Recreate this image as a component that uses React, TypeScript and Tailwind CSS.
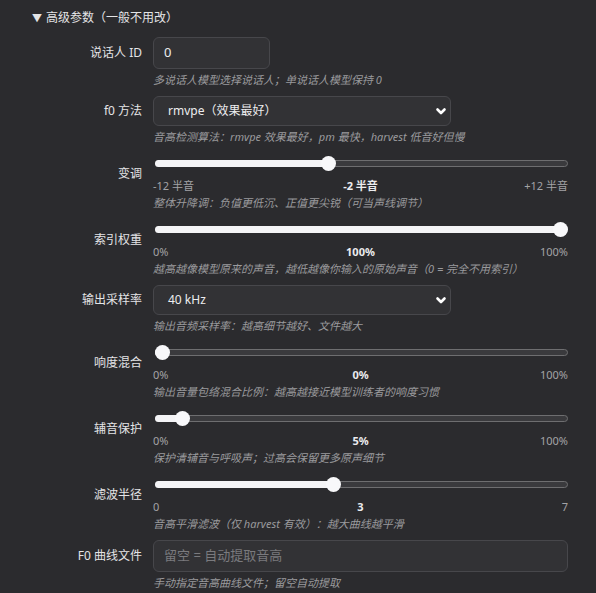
import React from 'react';

const font = { fontFamily: '"Noto Sans", "Noto Sans CJK SC", sans-serif' };

function Chevron() {
  return (
    <svg width="12" height="12" viewBox="0 0 12 12" className="text-white">
      <path d="M2.5 4.5 L6 8 L9.5 4.5" fill="none" stroke="currentColor" strokeWidth="2.6" strokeLinecap="round" strokeLinejoin="round" />
    </svg>
  );
}

function Slider({ pct, min, mid, max }: { pct: number; min: string; mid: string; max: string }) {
  return (
    <div className="flex flex-col">
      <div className="relative h-4 ml-[2px] mt-[2px]">
        <div className="absolute left-0 right-0 top-[5px] h-[7px] rounded-full bg-[#3a3a3d] border border-[#6e6e70]" />
        <div
          className="absolute left-0 top-[5px] h-[7px] rounded-full bg-[#f4f4f6]"
          style={{ width: `calc(${pct}% * (1 - 15 / 413) + 7px)` }}
        />
        <div
          className="absolute top-[1px] w-[15px] h-[15px] rounded-full bg-[#f8f8fa]"
          style={{ left: `calc(${pct}% * (1 - 15 / 413))` }}
        />
      </div>
      <div className="grid grid-cols-3 mt-[7px] text-[11px] leading-4">
        <span className="text-[#a3a3a6]">{min}</span>
        <span className="text-center font-bold text-[#ececee]">{mid}</span>
        <span className="text-right text-[#a3a3a6]">{max}</span>
      </div>
    </div>
  );
}

function Row({ label, hint, tight, children }: { label: string; hint: string; tight?: boolean; children: React.ReactNode }) {
  return (
    <div className="grid grid-cols-[153px_415px]">
      <div className="self-center text-right pr-[11px] text-[12px] text-[#e4e4e6]">{label}</div>
      <div>{children}</div>
      <div className={`col-start-2 ${tight ? 'mt-[1px]' : 'mt-[3px]'} text-[11px] leading-4 italic text-[#9a9a9d] whitespace-nowrap`}>{hint}</div>
    </div>
  );
}

function TextBox({ value, placeholder, w }: { value?: string; placeholder?: string; w: string }) {
  return (
    <div className={`${w} h-8 flex items-center px-[10px] rounded-md bg-[#323235] border border-[#47474b] text-[13px]`}>
      {value ? <span className="text-[#ededef]">{value}</span> : <span className="text-[#7a7a7e]">{placeholder}</span>}
    </div>
  );
}

function Select({ value }: { value: string }) {
  return (
    <div className="w-[298px] h-[30px] flex items-center justify-between pl-[14px] pr-[3px] rounded-md bg-[#323235] border border-[#47474b] text-[12px] text-[#ededef]">
      <span>{value}</span>
      <Chevron />
    </div>
  );
}

export default function App() {
  return (
    <div className="w-[596px] h-[593px] overflow-hidden bg-[#2b2b2e]" style={font}>
      <div className="pt-[8px] pl-[32px] h-[28px] text-[12px] leading-5 text-[#e4e4e6]">
        <span className="text-[10px] mr-[4px]">▼</span>高级参数（一般不用改）
      </div>
      <div className="flex flex-col gap-[8px] mt-[9px]">
        <Row label="说话人 ID" hint="多说话人模型选择说话人；单说话人模型保持 0">
          <TextBox value="0" w="w-[117px]" />
        </Row>
        <Row label="f0 方法" hint="音高检测算法：rmvpe 效果最好，pm 最快，harvest 低音好但慢">
          <Select value="rmvpe（效果最好）" />
        </Row>
        <Row label="变调" tight hint="整体升降调：负值更低沉、正值更尖锐（可当声线调节）">
          <Slider pct={41.67} min="-12 半音" mid="-2 半音" max="+12 半音" />
        </Row>
        <Row label="索引权重" tight hint="越高越像模型原来的声音，越低越像你输入的原始声音（0 = 完全不用索引）">
          <Slider pct={100} min="0%" mid="100%" max="100%" />
        </Row>
        <Row label="输出采样率" hint="输出音频采样率：越高细节越好、文件越大">
          <Select value="40 kHz" />
        </Row>
        <Row label="响度混合" tight hint="输出音量包络混合比例：越高越接近模型训练者的响度习惯">
          <Slider pct={0} min="0%" mid="0%" max="100%" />
        </Row>
        <Row label="辅音保护" tight hint="保护清辅音与呼吸声；过高会保留更多原声细节">
          <Slider pct={5} min="0%" mid="5%" max="100%" />
        </Row>
        <Row label="滤波半径" tight hint="音高平滑滤波（仅 harvest 有效）：越大曲线越平滑">
          <Slider pct={42.86} min="0" mid="3" max="7" />
        </Row>
        <Row label="F0 曲线文件" hint="手动指定音高曲线文件；留空自动提取">
          <TextBox placeholder="留空 = 自动提取音高" w="w-[415px]" />
        </Row>
      </div>
    </div>
  );
}
